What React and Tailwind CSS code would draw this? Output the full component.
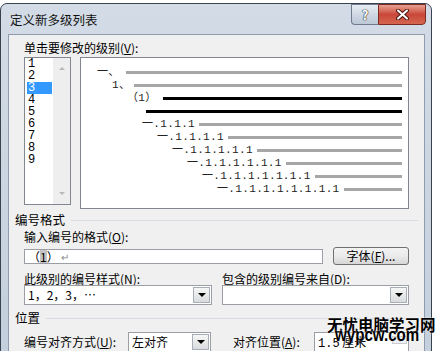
const LEVELS = ["1", "2", "3", "4", "5", "6", "7", "8", "9"];

const ROWS = [
  { text: "一、", box: "ml-[16px] w-[29px]", line: "bg-[#a6a6a6]" },
  { text: "1、", box: "ml-[31px] w-[22px]", line: "bg-[#a6a6a6]" },
  { text: "（1）", box: "ml-[46px] w-[36px]", line: "bg-black" },
  { text: "", box: "ml-[65px] w-0", line: "bg-black" },
  { text: "一.1.1.1", box: "ml-[61px] w-[57px]", line: "bg-[#a6a6a6]" },
  { text: "一.1.1.1.1", box: "ml-[76px] w-[71px]", line: "bg-[#a6a6a6]" },
  { text: "一.1.1.1.1.1", box: "ml-[91px] w-[85px]", line: "bg-[#a6a6a6]" },
  { text: "一.1.1.1.1.1.1", box: "ml-[106px] w-[99px]", line: "bg-[#a6a6a6]" },
  { text: "一.1.1.1.1.1.1.1", box: "ml-[121px] w-[113px]", line: "bg-[#a6a6a6]" },
  { text: "一.1.1.1.1.1.1.1.1", box: "ml-[136px] w-[127px]", line: "bg-[#a6a6a6]" },
];

function TitleBar() {
  return (
    <div className="flex h-[30px] items-start justify-between">
      <div className="pl-[9px] pt-[8px] text-[12.5px] leading-[16px] text-[#111]">定义新多级列表</div>
      <div className="mr-[5px] flex">
        <div className="flex h-[21px] w-[27px] items-center justify-center rounded-bl-[4px] border border-r-0 border-[#6f7c8e] bg-gradient-to-b from-[#e9eef4] via-[#cfd8e3] to-[#bcc8d6] text-[13px] font-bold leading-none text-white [text-shadow:0_0_1px_#333,0_0_1px_#333,0_0_1px_#333]">
          ?
        </div>
        <div className="flex h-[21px] w-[48px] items-center justify-center rounded-br-[4px] border border-[#7a2c22] bg-gradient-to-b from-[#e7a192] via-[#c9473a] to-[#d5664f]">
          <svg width="13" height="11" viewBox="0 0 13 11">
            <path d="M2 1.5 L11 9.5 M11 1.5 L2 9.5" stroke="#4a1810" strokeWidth="4" strokeLinecap="round" />
            <path d="M2 1.5 L11 9.5 M11 1.5 L2 9.5" stroke="#fff" strokeWidth="2" strokeLinecap="round" />
          </svg>
        </div>
      </div>
    </div>
  );
}

function DropArrow() {
  return (
    <div className="flex h-full w-[17px] items-center justify-center border border-[#a7aeb8] bg-gradient-to-b from-[#f6f6f6] to-[#d9dbde]">
      <div className="h-0 w-0 border-x-[4px] border-t-[4px] border-x-transparent border-t-black" />
    </div>
  );
}

function Select({ width, children }) {
  return (
    <div className={`flex h-[20px] items-stretch border border-[#9b9fa5] bg-white p-[1px] ${width}`}>
      <div className="flex-1 overflow-hidden whitespace-nowrap pl-[2px] text-[12px] leading-[16px]">{children}</div>
      <DropArrow />
    </div>
  );
}

function Heading({ title, className }) {
  return (
    <div className={`flex items-center ${className}`}>
      <span className="text-[12.5px] leading-[16px]">{title}</span>
      <div className="ml-[6px] mr-[6px] h-px flex-1 bg-[#d8dde4]" />
    </div>
  );
}

function LevelList() {
  return (
    <div className="flex h-[148px] w-[47px] border border-[#82878f] bg-white">
      <div className="w-[28px] pl-[2px] pt-0">
        {LEVELS.map((n) => (
          <div
            key={n}
            className={`h-[12px] w-[25px] pl-px font-['Liberation_Mono',monospace] text-[12px] leading-[12px] ${
              n === "3" ? "bg-[#3399ff] text-white" : "text-black"
            }`}
          >
            {n}
          </div>
        ))}
      </div>
      <div className="flex w-[17px] flex-col justify-between bg-[#eeeeee] py-[9px]">
        <div className="mx-auto h-0 w-0 border-x-[3px] border-b-[3px] border-x-transparent border-b-[#b8b8b8]" />
        <div className="mx-auto h-0 w-0 border-x-[3px] border-t-[3px] border-x-transparent border-t-[#b8b8b8]" />
      </div>
    </div>
  );
}

function Preview() {
  return (
    <div className="ml-[9px] h-[152px] w-[329px] border border-[#82878f] bg-white pt-[8px]">
      {ROWS.map((r, i) => (
        <div key={i} className="flex h-[13px] items-center">
          <span
            className={`shrink-0 whitespace-nowrap font-['Liberation_Mono','Noto_Sans_CJK_SC',monospace] text-[11px] leading-[13px] tracking-[0.35px] text-[#222] ${r.box}`}
          >
            {r.text}
          </span>
          <div className={`mr-[6px] h-[3px] flex-1 ${r.line}`} />
        </div>
      ))}
    </div>
  );
}

function Watermark() {
  return (
    <>
      <div className="absolute left-[327px] top-[316px] font-['Noto_Sans_CJK_SC',sans-serif] text-[15.5px] font-bold leading-[16px] text-black [text-shadow:0_0_2px_#fff]">
        无忧电脑学习网
      </div>
      <div className="absolute left-[335px] top-[326px] origin-left scale-x-[0.84] font-['Liberation_Sans',sans-serif] text-[18px] font-bold leading-[18px] text-black [text-shadow:0_0_2px_#fff]">
        wypcw.com
      </div>
    </>
  );
}

export default function App() {
  return (
    <div className="relative h-[351px] w-[440px] overflow-hidden bg-white pt-[3px] font-['Noto_Sans_CJK_SC',sans-serif] text-black">
      <div className="flex h-[360px] w-[432px] flex-col rounded-t-[7px] border border-[#3a4250] bg-gradient-to-b from-[#d3dce6] to-[#c3cfdc]">
        <TitleBar />
        <div className="ml-[7px] mr-[6px] flex-1 border border-[#8f9cae] bg-[#f0f0f0] pl-[6px] pt-[6px]">
          <div className="ml-[9px] text-[12px] leading-[14px]">
            单击要修改的级别(<span className="underline">V</span>):
          </div>
          <div className="ml-[9px] mt-[2px] flex items-start">
            <LevelList />
            <Preview />
          </div>

          <Heading title="编号格式" className="mt-[3px]" />
          <div className="ml-[9px] mt-[2px] text-[12px] leading-[14px]">
            输入编号的格式(<span className="underline">O</span>):
          </div>
          <div className="ml-[9px] mt-[3px] flex h-[18px] items-center">
            <div className="flex h-[15px] w-[299px] items-center border border-[#9b9fa5] bg-white pl-[3px] text-[12px] leading-[13px]">
              <span>（</span>
              <span className="bg-[#c4c4c4]">1</span>
              <span>）</span>
              <span className="ml-[2px] text-[10px] text-[#8a8a8a]">↵</span>
            </div>
            <div className="ml-[10px] flex h-[18px] w-[76px] items-center justify-center rounded-[3px] border border-[#707070] bg-gradient-to-b from-[#f3f3f3] via-[#ebebeb] to-[#d6d6d6] text-[12px] leading-[14px]">
              字体(<span className="underline">F</span>)...
            </div>
          </div>

          <div className="ml-[9px] mt-[7px] flex text-[12px] leading-[13px]">
            <div className="w-[198px]">
              此级别的编号样式(<span className="underline">N</span>):
            </div>
            <div>
              包含的级别编号来自(<span className="underline">D</span>):
            </div>
          </div>
          <div className="ml-[9px] flex">
            <Select width="w-[188px]">1，2，3，…</Select>
            <div className="ml-[10px]">
              <Select width="w-[187px]" />
            </div>
          </div>

          <Heading title="位置" className="mt-[5px]" />
          <div className="ml-[9px] mt-[6px] flex h-[20px] items-center text-[12px] leading-[14px]">
            <div className="w-[104px]">
              编号对齐方式(<span className="underline">U</span>):
            </div>
            <Select width="w-[83px]">左对齐</Select>
            <div className="ml-[22px] w-[81px]">
              对齐位置(<span className="underline">A</span>):
            </div>
            <div className="flex h-[20px] w-[95px] items-start border border-[#9b9fa5] bg-white p-[1px]">
              <div className="flex-1 pl-[2px] text-[12px] leading-[16px]">
                <span className="font-['Liberation_Mono',monospace]">1.5</span> 厘米
              </div>
              <div className="mt-[2px] flex h-[8px] w-[15px] items-center justify-center border border-[#c8ccd2] bg-[#eef0f3]">
                <div className="h-0 w-0 border-x-[3px] border-t-[3px] border-x-transparent border-t-[#9aa0a8]" />
              </div>
            </div>
          </div>
        </div>
      </div>
      <Watermark />
    </div>
  );
}
